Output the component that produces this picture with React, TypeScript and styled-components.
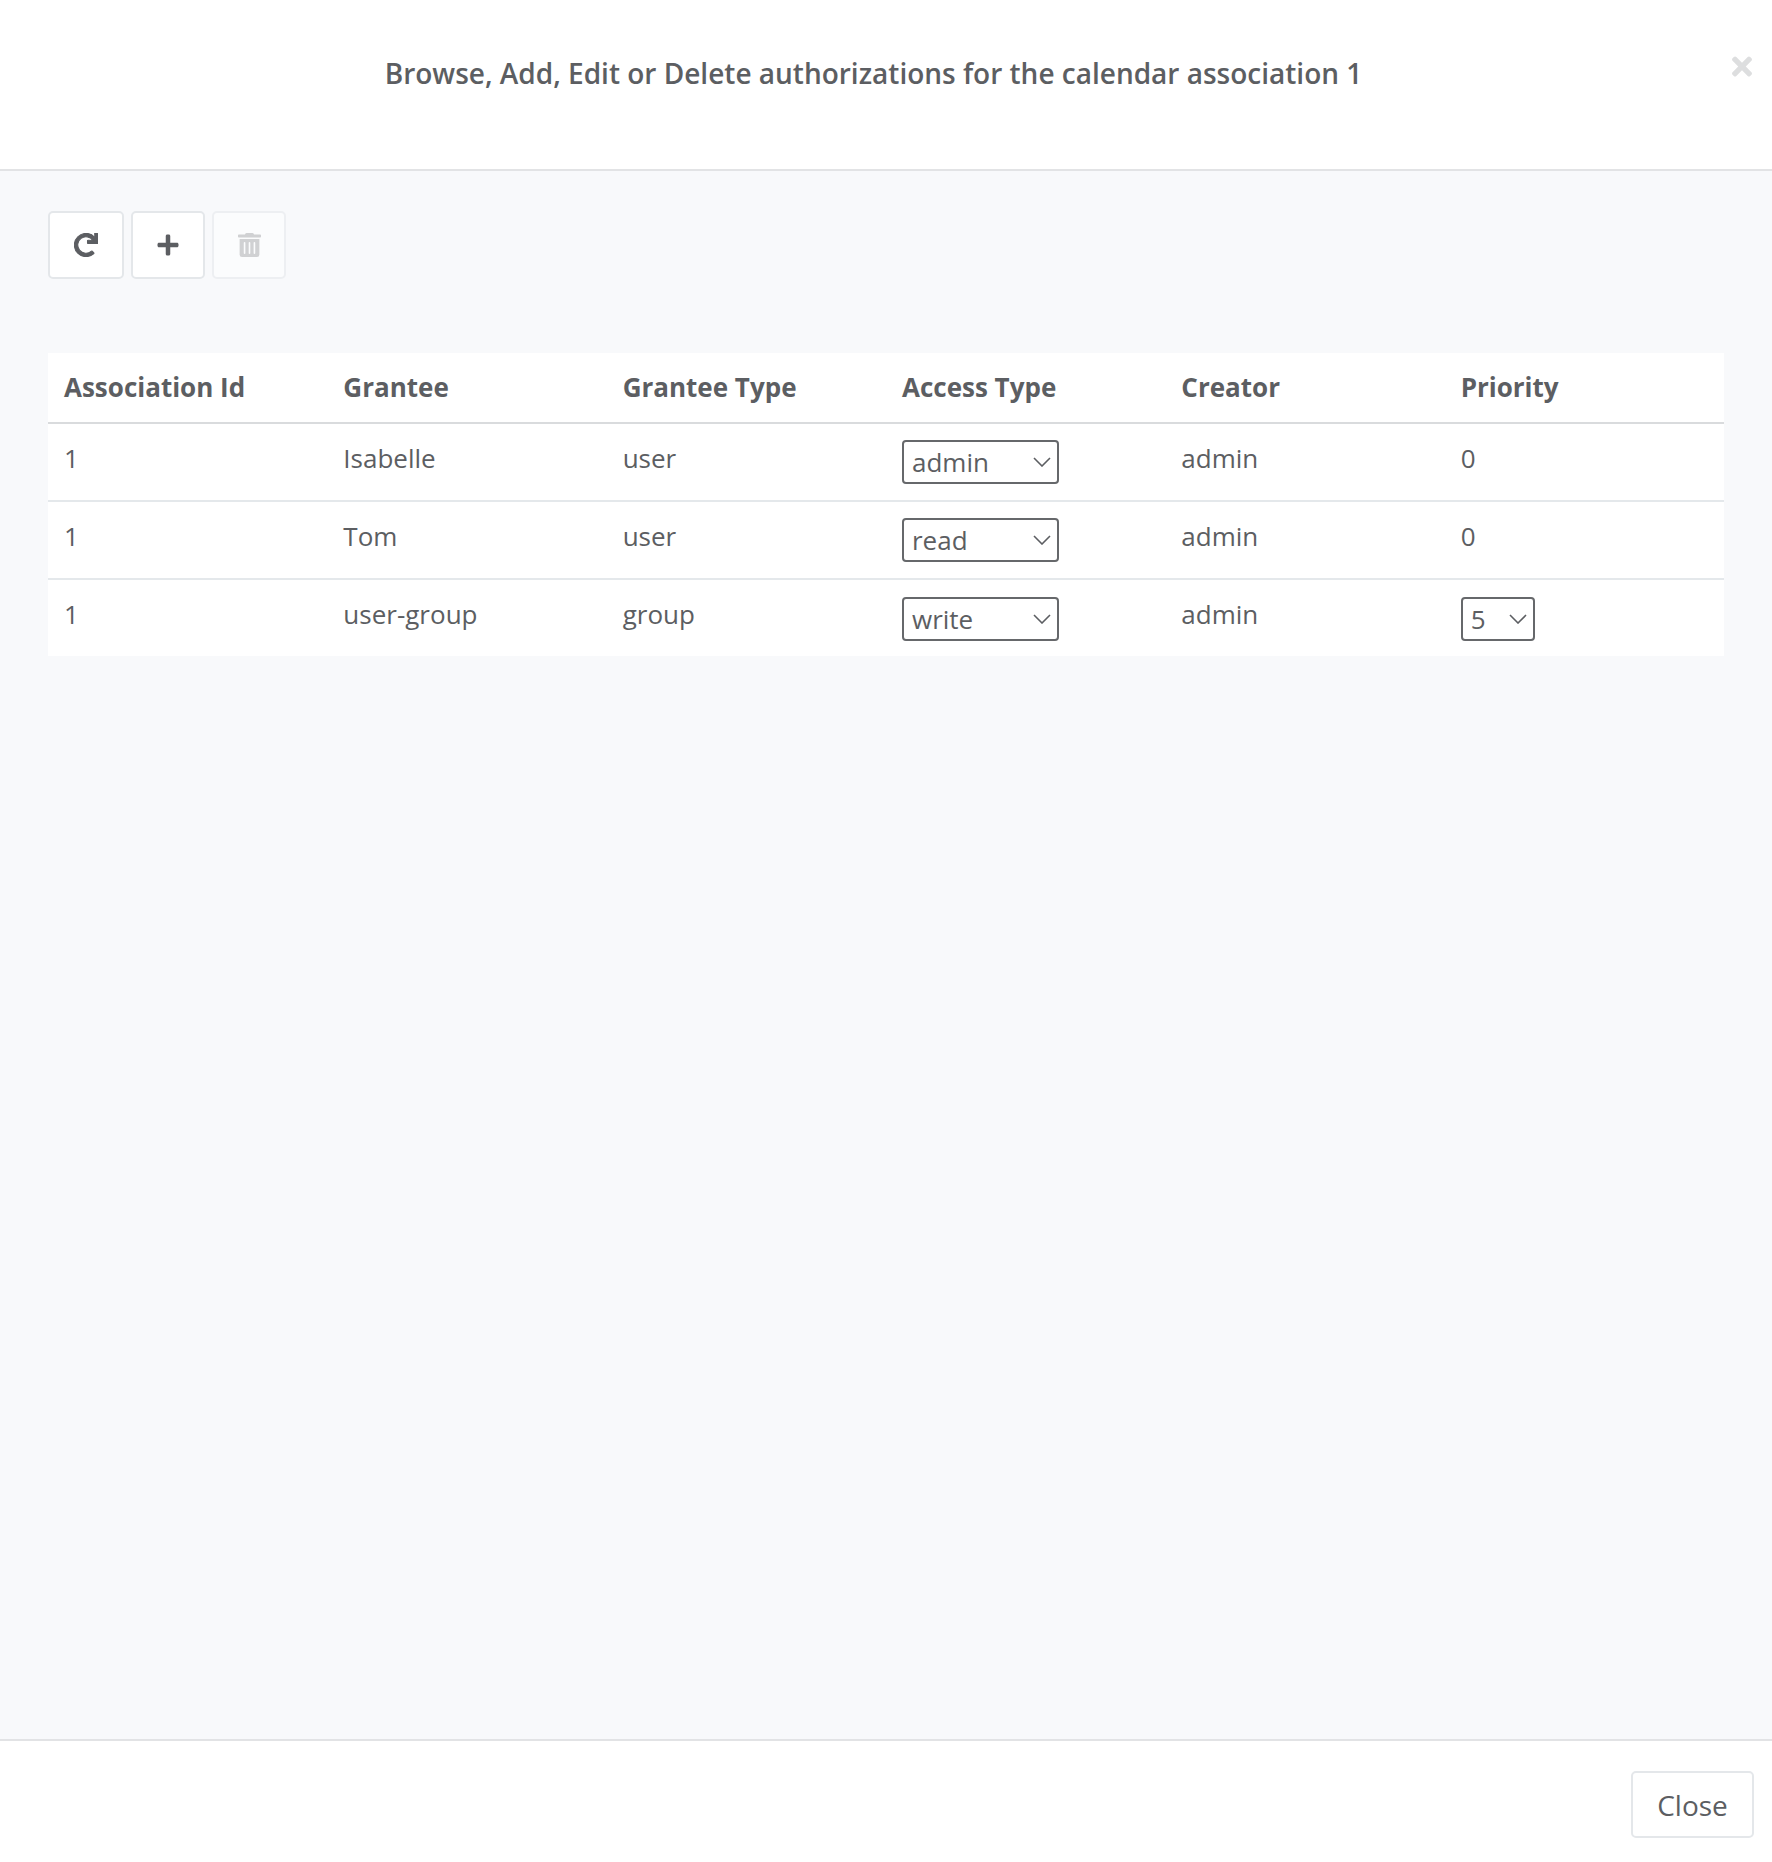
import styled, { createGlobalStyle } from "styled-components";
import { FaPlus, FaRedo, FaTimes, FaTrashAlt } from "react-icons/fa";

const GlobalStyle = createGlobalStyle`
html, body {
  margin: 0;
  padding: 0;
  background: #fff;
}
* {
  box-sizing: border-box;
}
`

const Modal = styled.div`
display: flex;
flex-direction: column;
height: 1862px;
font-family: "Open Sans", sans-serif;
color: #5c5e62;
`

const Header = styled.header`
display: flex;
align-items: flex-start;
height: 171px;
padding: 0 20px 0 15px;
background: #fff;
border-bottom: 2px solid #e2e3e5;
`

const Title = styled.h5`
flex: 1;
margin: 0;
padding-top: 52px;
font-size: 28px;
line-height: 42px;
font-weight: 600;
text-align: center;
`

const CloseIcon = styled.button`
display: flex;
width: 20px;
height: 20px;
margin-top: 56px;
padding: 0;
border: 0;
background: none;
color: #dddedf;
font-size: 29px;
align-items: center;
justify-content: center;
`

const Body = styled.main`
flex: 1;
padding: 40px 48px 0;
background: #f8f9fb;
`

const Toolbar = styled.div`
display: flex;
gap: 7px;
margin-bottom: 74px;
`

const ToolButton = styled.button<{ $width: number }>`
display: flex;
align-items: center;
justify-content: center;
width: ${(p) => p.$width}px;
height: 68px;
padding: 0;
border: 2px solid #e4e7ea;
border-radius: 5px;
background: #fff;
color: #5c5e62;
font-size: 24px;

&:disabled {
  opacity: 0.5;
  color: #a9aaac;
}
`

const RedoIcon = styled(FaRedo)`
stroke: currentColor;
stroke-width: 22px;
`

const TrashIcon = styled(FaTrashAlt)`
width: 23px;
height: 24px;
`

const Table = styled.table`
width: 100%;
table-layout: fixed;
border-collapse: collapse;
background: #fff;
font-size: 26px;
line-height: 39px;
`

const HeadCell = styled.th`
height: 70px;
padding: 0 16px 1px;
border-bottom: 2px solid #d9dbdd;
font-weight: 700;
text-align: left;
`

const Cell = styled.td`
height: 78px;
padding: 0 16px 8px;
vertical-align: middle;
`

const Row = styled.tr`
border-bottom: 2px solid #e4e8eb;

&:last-child {
  border-bottom: 0;
}

&:last-child ${Cell} {
  height: 77px;
  padding-bottom: 7px;
}
`

const SelectWrap = styled.div<{ $width: number }>`
position: relative;
width: ${(p) => p.$width}px;
height: 44px;
margin-top: 8px;
color: #5c5e62;

svg {
  position: absolute;
  top: 17px;
  right: 8px;
  pointer-events: none;
}
`

const Select = styled.select`
display: block;
width: 100%;
height: 100%;
padding: 0 0 0 8px;
border: 2px solid #66686b;
border-radius: 4px;
background: #fff;
appearance: none;
color: #5c5e62;
font-family: "Open Sans", sans-serif;
font-size: 26px;
`

const Footer = styled.footer`
display: flex;
justify-content: flex-end;
height: 123px;
padding: 30px 18px 0 0;
background: #fff;
border-top: 2px solid #e2e3e5;
`

const CloseButton = styled.button`
width: 123px;
height: 67px;
padding: 0;
border: 2px solid #e4e7ea;
border-radius: 5px;
background: #fff;
color: #5c5e62;
font-family: "Open Sans", sans-serif;
font-size: 28px;
`

const columns = ["Association Id", "Grantee", "Grantee Type", "Access Type", "Creator", "Priority"];

const rows = [
    { grantee: "Isabelle", type: "user", access: "admin", priority: null },
    { grantee: "Tom", type: "user", access: "read", priority: null },
    { grantee: "user-group", type: "group", access: "write", priority: "5" },
];

function Dropdown({ value, options, width }: { value: string; options: string[]; width: number }) {
    return (
        <SelectWrap $width={width}>
            <Select defaultValue={value}>
                {options.map((o) => <option key={o}>{o}</option>)}
            </Select>
            <svg width="18" height="10" viewBox="0 0 18 10" fill="none" stroke="currentColor" strokeWidth="1.6">
                <path d="M1 1l8 8 8-8" />
            </svg>
        </SelectWrap>
    );
}

export default function App() {
    return (
        <Modal>
            <GlobalStyle />
            <Header>
                <Title>Browse, Add, Edit or Delete authorizations for the calendar association 1</Title>
                <CloseIcon aria-label="Close"><FaTimes /></CloseIcon>
            </Header>
            <Body>
                <Toolbar>
                    <ToolButton $width={76}><RedoIcon /></ToolButton>
                    <ToolButton $width={74}><FaPlus /></ToolButton>
                    <ToolButton $width={74} disabled><TrashIcon preserveAspectRatio="none" /></ToolButton>
                </Toolbar>
                <Table>
                    <thead>
                        <tr>
                            {columns.map((c) => <HeadCell key={c}>{c}</HeadCell>)}
                        </tr>
                    </thead>
                    <tbody>
                        {rows.map((r) => (
                            <Row key={r.grantee}>
                                <Cell>1</Cell>
                                <Cell>{r.grantee}</Cell>
                                <Cell>{r.type}</Cell>
                                <Cell><Dropdown value={r.access} options={["read", "write", "admin"]} width={157} /></Cell>
                                <Cell>admin</Cell>
                                <Cell>
                                    {r.priority ? <Dropdown value={r.priority} options={["0", "5", "10"]} width={74} /> : "0"}
                                </Cell>
                            </Row>
                        ))}
                    </tbody>
                </Table>
            </Body>
            <Footer>
                <CloseButton>Close</CloseButton>
            </Footer>
        </Modal>
    )
}
